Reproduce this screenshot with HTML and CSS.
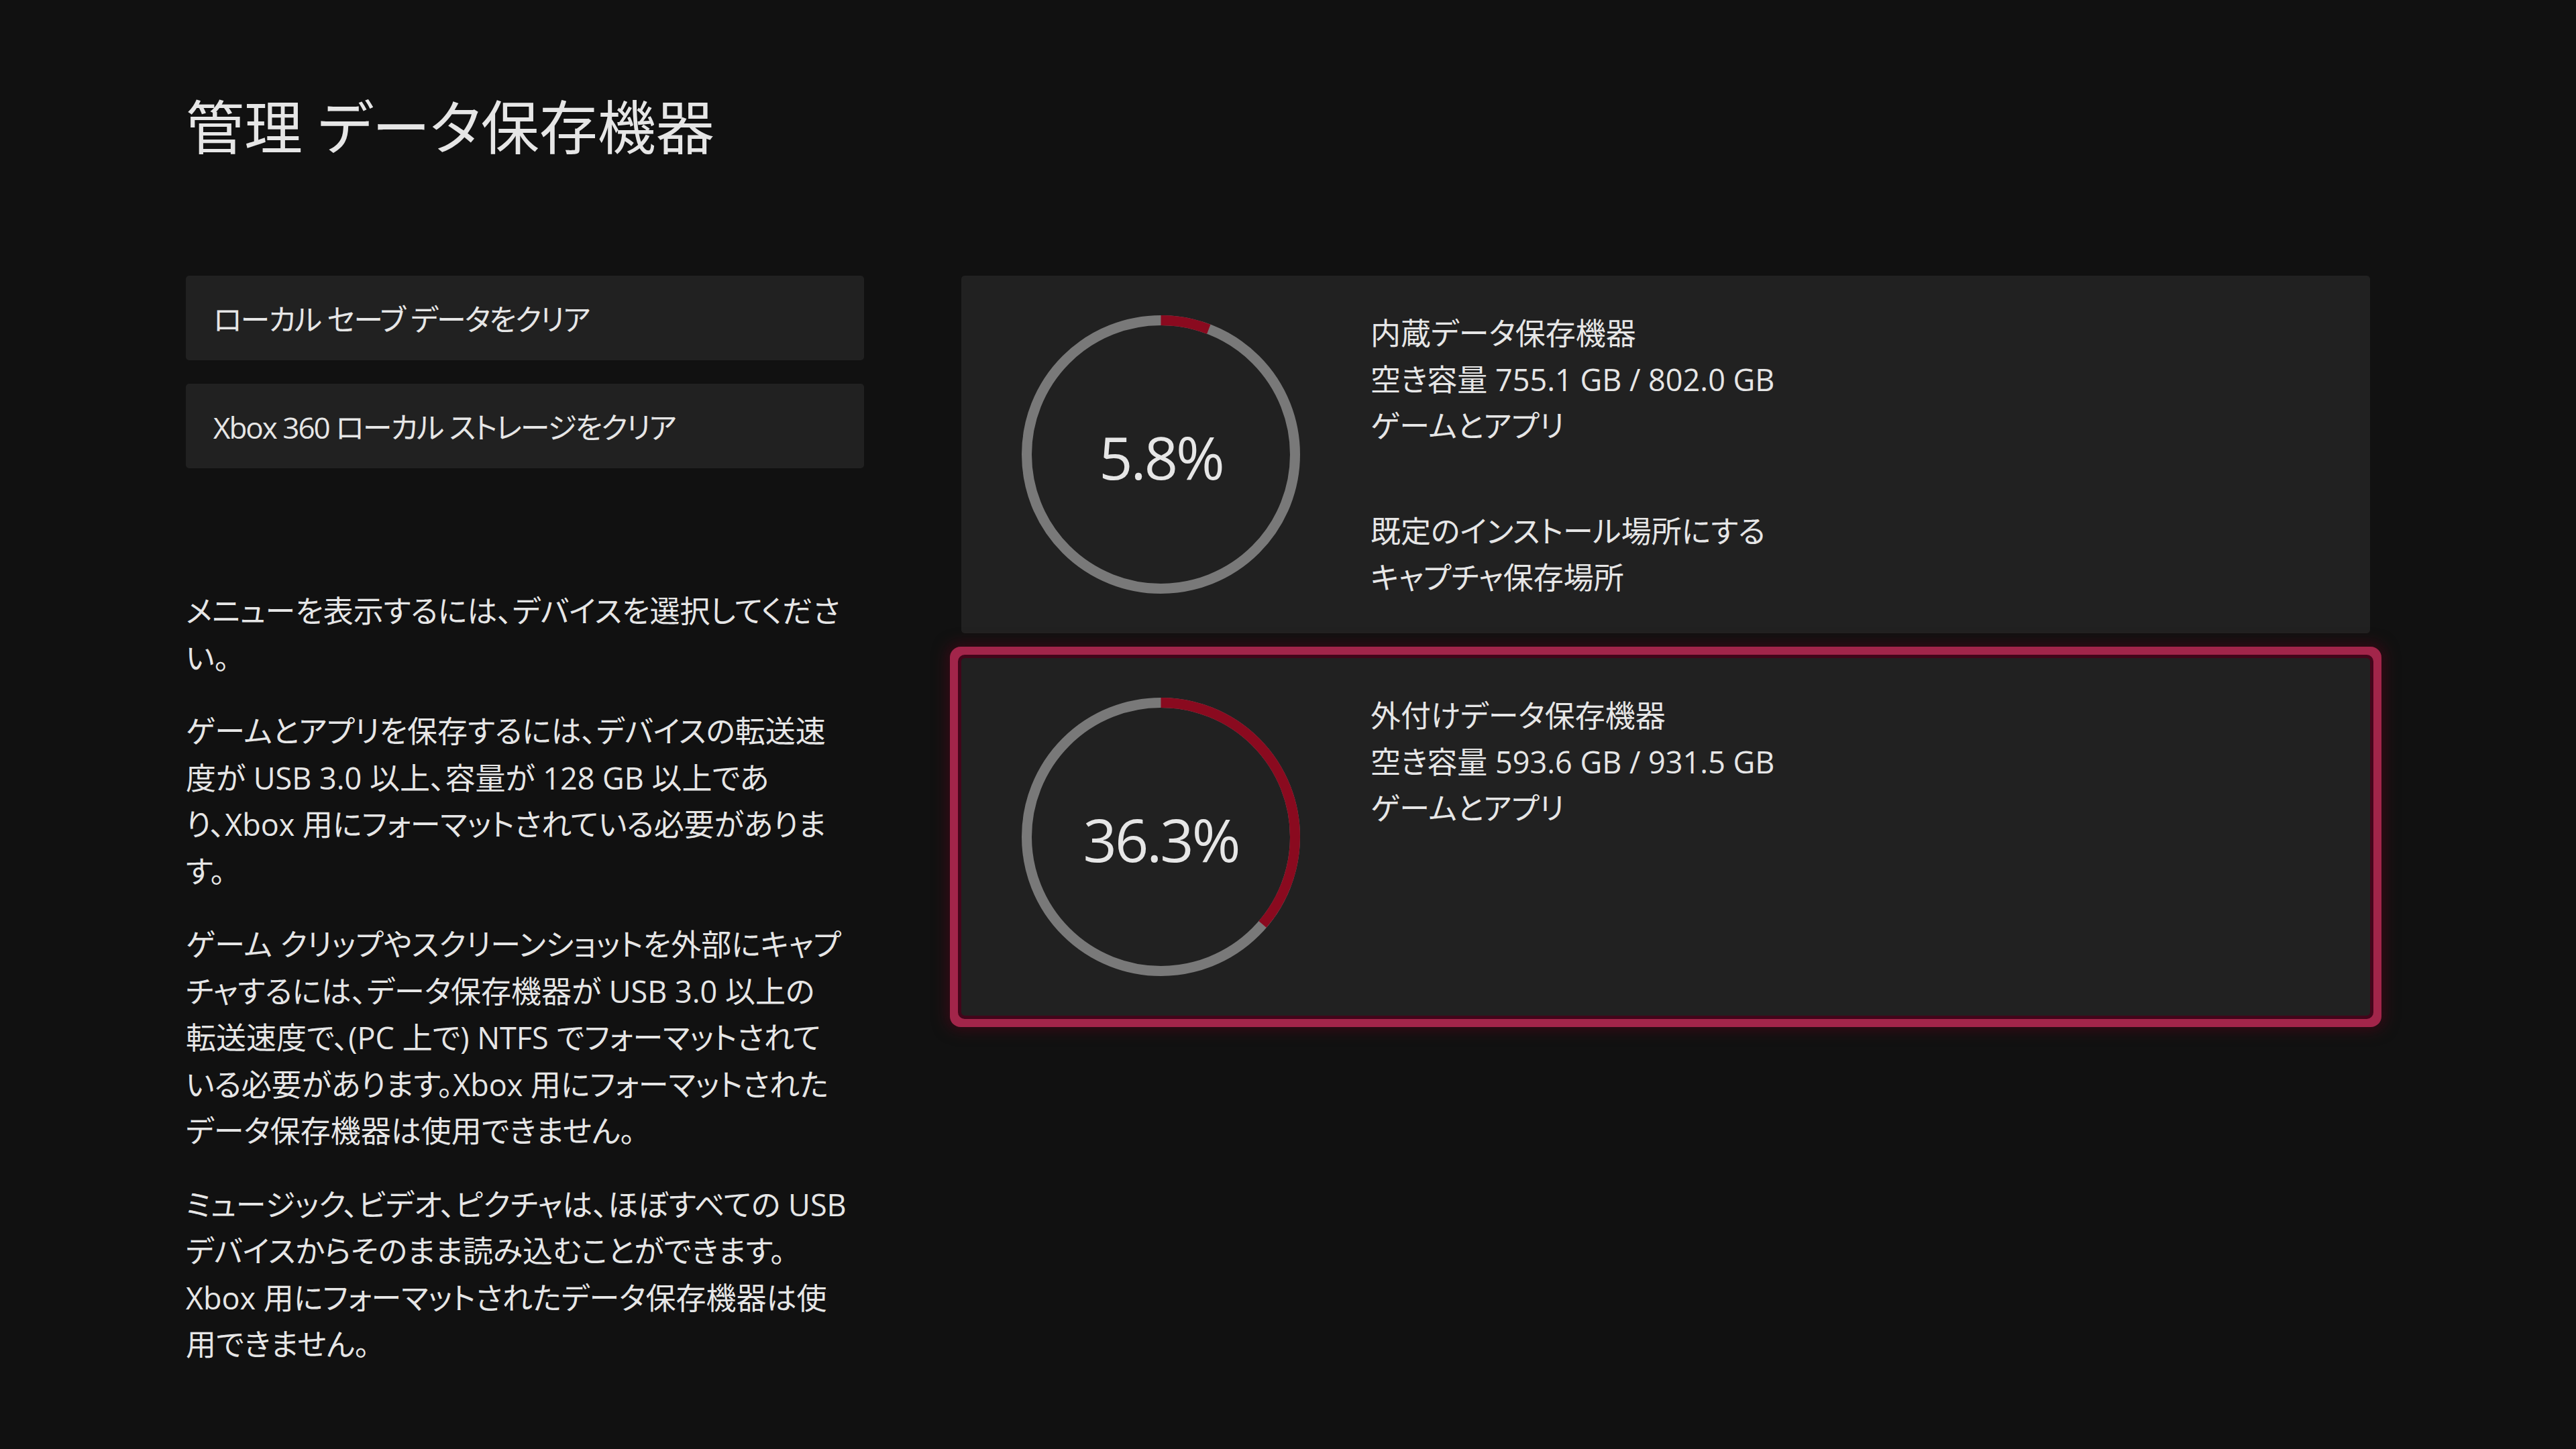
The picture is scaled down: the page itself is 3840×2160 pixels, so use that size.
FILE: index.html
```html
<!DOCTYPE html>
<html lang="ja">
<head>
    <meta charset="UTF-8">
    <title>管理 データ保存機器</title>
    <link rel="stylesheet" href="styles.css">
</head>
<body>

    <div class="screen">
        <h1 class="title">管理 データ保存機器</h1>

        <div class="layout">
            <!-- Left column: actions and help text -->
            <div class="side">
                <div class="actions">
                    <div class="action">ローカル セーブ データをクリア</div>
                    <div class="action">Xbox 360 ローカル ストレージをクリア</div>
                </div>

                <div class="notes">
                    <p>メニューを表示するには、デバイスを選択してくださ<br>い。</p>
                    <p>ゲームとアプリを保存するには、デバイスの転送速<br>度が USB 3.0 以上、容量が 128 GB 以上であ<br>り、Xbox 用にフォーマットされている必要がありま<br>す。</p>
                    <p>ゲーム クリップやスクリーンショットを外部にキャプ<br>チャするには、データ保存機器が USB 3.0 以上の<br>転送速度で、(PC 上で) NTFS でフォーマットされて<br>いる必要があります。Xbox 用にフォーマットされた<br>データ保存機器は使用できません。</p>
                    <p>ミュージック、ビデオ、ピクチャは、ほぼすべての USB<br>デバイスからそのまま読み込むことができます。<br>Xbox 用にフォーマットされたデータ保存機器は使<br>用できません。</p>
                </div>
            </div>

            <!-- Right column: drives -->
            <div class="drives">
                <div class="drive">
                    <div class="meter">
                        <svg width="415" height="415" viewBox="0 0 415 415">
                            <circle class="meter-track" cx="207.5" cy="207.5" r="200"></circle>
                            <circle class="meter-used" cx="207.5" cy="207.5" r="200" stroke-dasharray="72.9 1256.6" transform="rotate(-90 207.5 207.5)"></circle>
                        </svg>
                        <span class="meter-value">5.8%</span>
                    </div>
                    <div class="drive-info">
                        <div class="info-group">
                            <div>内蔵データ保存機器</div>
                            <div>空き容量 755.1 GB / 802.0 GB</div>
                            <div>ゲームとアプリ</div>
                        </div>
                        <div class="info-group">
                            <div>既定のインストール場所にする</div>
                            <div>キャプチャ保存場所</div>
                        </div>
                    </div>
                </div>

                <div class="drive selected">
                    <div class="meter">
                        <svg width="415" height="415" viewBox="0 0 415 415">
                            <circle class="meter-track" cx="207.5" cy="207.5" r="200"></circle>
                            <circle class="meter-used" cx="207.5" cy="207.5" r="200" stroke-dasharray="456.1 1256.6" transform="rotate(-90 207.5 207.5)"></circle>
                        </svg>
                        <span class="meter-value">36.3%</span>
                    </div>
                    <div class="drive-info">
                        <div class="info-group">
                            <div>外付けデータ保存機器</div>
                            <div>空き容量 593.6 GB / 931.5 GB</div>
                            <div>ゲームとアプリ</div>
                        </div>
                    </div>
                </div>
            </div>
        </div>
    </div>

</body>
</html>
```

FILE: styles.css
```css
body {
    margin: 0;
    background-color: #111111;
    color: #e6e6e6;
    font-family: "Open Sans", "Noto Sans CJK JP", sans-serif;
    font-feature-settings: "palt";
}

.screen {
    padding: 136px 0 0 277px;
}

.title {
    margin: 0;
    font-size: 87px;
    font-weight: 400;
    line-height: 106px;
}

.layout {
    display: flex;
    gap: 145px;
    margin-top: 169px;
}

/* Left column */
.side {
    width: 1011px;
    flex-shrink: 0;
}

.actions {
    display: flex;
    flex-direction: column;
    gap: 35px;
}

.action {
    height: 126px;
    padding-left: 41px;
    display: flex;
    align-items: center;
    background-color: #212121;
    border-radius: 5px;
    font-size: 44px;
    letter-spacing: -2px;
}

.notes {
    margin-top: 178px;
    font-size: 45px;
    line-height: 69.5px;
    white-space: nowrap;
}

.notes p {
    margin: 0 0 40px;
}

/* Drive cards */
.drives {
    width: 2100px;
    display: flex;
    flex-direction: column;
    gap: 37px;
}

.drive {
    height: 533px;
    box-sizing: border-box;
    padding-left: 90px;
    display: flex;
    align-items: flex-start;
    background-color: #212121;
    border-radius: 5px;
}

.drive.selected {
    box-shadow:
        0 0 0 5px #42051a,
        0 0 0 17px #a2254a,
        0 0 22px 20px rgba(95, 0, 25, 0.55);
}

.meter {
    align-self: center;
    display: grid;
    place-items: center;
}

.meter > * {
    grid-area: 1 / 1;
}

.meter svg {
    display: block;
}

.meter-track,
.meter-used {
    fill: none;
    stroke-width: 15;
}

.meter-track {
    stroke: #797979;
}

.meter-used {
    stroke: #8a0a1f;
}

.meter-value {
    font-size: 88px;
    letter-spacing: -3px;
    margin-top: 6px;
}

.drive-info {
    margin-left: 105px;
    padding-top: 51px;
    font-size: 45px;
    line-height: 69px;
}

.info-group + .info-group {
    margin-top: 88px;
}
```
